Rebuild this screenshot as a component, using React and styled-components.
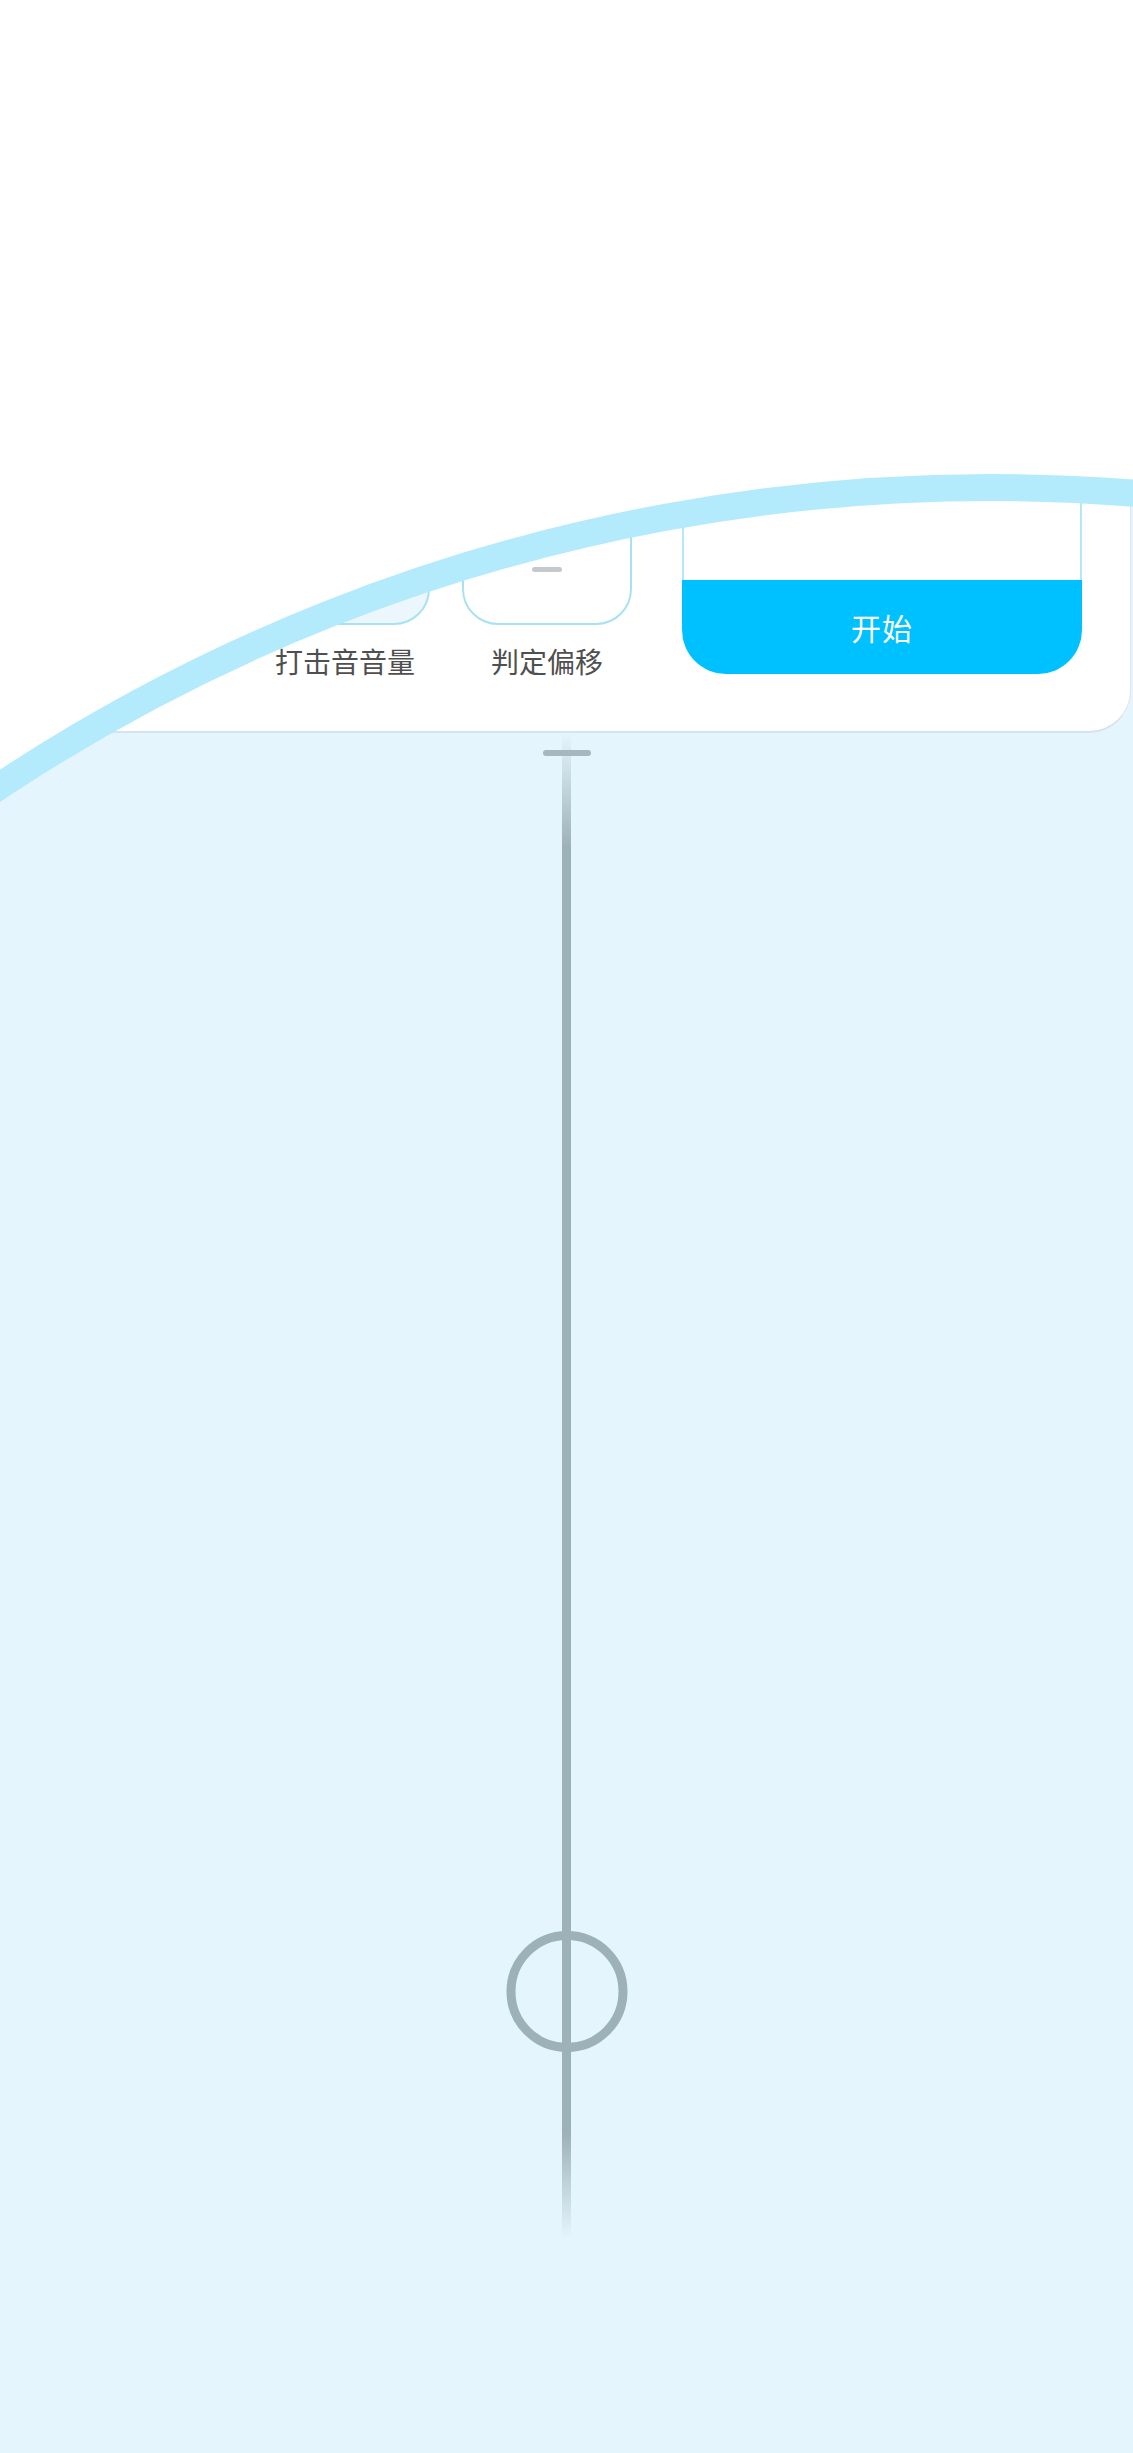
import React from "react";
import styled, { createGlobalStyle } from "styled-components";

const GlobalStyle = createGlobalStyle`
  html, body {
    margin: 0;
    padding: 0;
    background: #e4f5fd;
  }
  body {
    font-family: "Noto Sans CJK SC", "Noto Sans", sans-serif;
  }
`;

const Page = styled.div`
  position: relative;
  width: 1133px;
  min-height: 2453px;
  background: #e4f5fd;
  overflow: hidden;
`;

const Panel = styled.div`
  height: 733px;
  margin-right: 2px;
  background: #fff;
  border-bottom: 2px solid #d5e4ec;
  border-right: 1px solid #dbe8ef;
  border-bottom-right-radius: 42px;
  display: flex;
  align-items: flex-end;
  padding: 0 0 52px 260px;
  box-sizing: border-box;
`;

const Control = styled.div`
  width: 170px;
  display: flex;
  flex-direction: column;
  align-items: center;
  margin-right: ${(p) => p.$gap}px;
`;

const KeyBox = styled.div`
  width: 170px;
  height: 200px;
  box-sizing: border-box;
  border: 2px solid #a8e2f2;
  border-radius: 0 0 36px 36px;
  background: ${(p) => (p.$filled ? "#ebf7fd" : "#fff")};
  display: flex;
  flex-direction: column;
  align-items: center;
  justify-content: flex-end;
  padding-bottom: 51px;
`;

const Dash = styled.div`
  width: 30px;
  height: 5px;
  border-radius: 3px;
  background: #c6c9cb;
`;

const Label = styled.div`
  margin-top: 18px;
  font-size: 28px;
  line-height: 36px;
  color: #4f4f4f;
  white-space: nowrap;
`;

const StartBox = styled.div`
  width: 400px;
  height: 240px;
  margin-bottom: 5px;
  display: flex;
  flex-direction: column;
`;

const Tank = styled.div`
  flex: 1;
  box-sizing: border-box;
  border: 2px solid #b4e8f7;
  border-bottom: none;
`;

const StartFill = styled.div`
  height: 94px;
  background: #00c1ff;
  border-radius: 0 0 44px 44px;
  display: flex;
  align-items: center;
  justify-content: center;
  color: #fff;
  font-size: 30px;
  letter-spacing: 1px;
`;

const Stage = styled.div`
  display: flex;
  flex-direction: column;
  align-items: center;
  height: 1718px;
`;

const Track = styled.div`
  position: relative;
  width: 9px;
  height: 1505px;
  background: linear-gradient(
    to bottom,
    rgba(156, 176, 184, 0) 0px,
    #9db1b9 115px,
    #9db1b9 1400px,
    rgba(156, 176, 184, 0) 100%
  );
`;

const TopBar = styled.div`
  position: absolute;
  top: 17px;
  left: 50%;
  transform: translateX(-50%);
  width: 48px;
  height: 6px;
  border-radius: 3px;
  background: #a7b7be;
`;

const Ring = styled.div`
  position: absolute;
  top: 1198px;
  left: 50%;
  transform: translateX(-50%);
  width: 121px;
  height: 121px;
  box-sizing: border-box;
  border: 9px solid #9db1b9;
  border-radius: 50%;
`;

const Reveal = styled.svg`
  position: absolute;
  top: 0;
  left: 0;
  pointer-events: none;
`;

// circular reveal: everything outside the big circle is still white
const CX = 991;
const CY = 2283;
const R = 1795.5;
const circlePath = `M ${CX - R} ${CY} a ${R} ${R} 0 1 0 ${2 * R} 0 a ${R} ${R} 0 1 0 ${-2 * R} 0 Z`;

export default function App() {
  return (
    <>
      <GlobalStyle />
      <Page>
        <Panel>
          <Control $gap={32}>
            <KeyBox $filled />
            <Label>打击音音量</Label>
          </Control>
          <Control $gap={50}>
            <KeyBox>
              <Dash />
            </KeyBox>
            <Label>判定偏移</Label>
          </Control>
          <StartBox>
            <Tank />
            <StartFill>开始</StartFill>
          </StartBox>
        </Panel>
        <Stage>
          <Track>
            <TopBar />
            <Ring />
          </Track>
        </Stage>
        <Reveal width="1133" height="900" viewBox="0 0 1133 900">
          <path
            d={`M -10 -10 H 1143 V 900 H -10 Z ${circlePath}`}
            fill="#fff"
            fillRule="evenodd"
          />
          <circle cx={CX} cy={CY} r={R} fill="none" stroke="#b3ebfc" strokeWidth="27" />
        </Reveal>
      </Page>
    </>
  );
}
